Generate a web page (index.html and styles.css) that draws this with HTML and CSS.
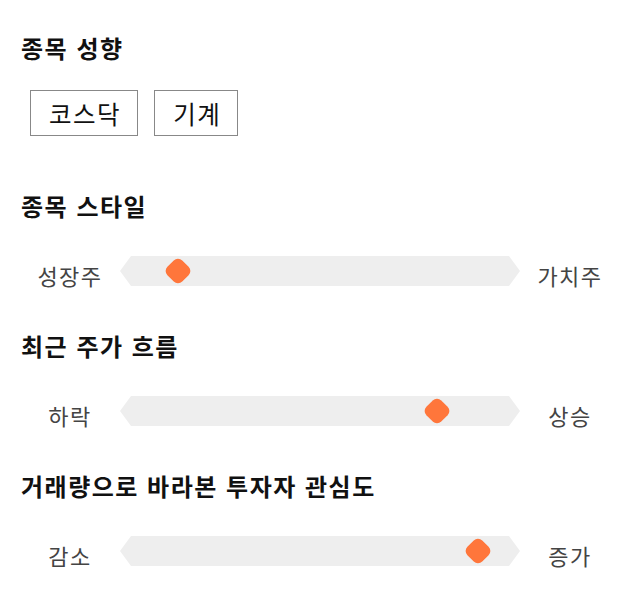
FILE: index.html
```html
<!DOCTYPE html>
<html lang="ko">
<head>
    <meta charset="UTF-8">
    <meta name="viewport" content="width=device-width, initial-scale=1.0">
    <title>종목 분석</title>
    <link rel="stylesheet" href="styles.css">
</head>
<body>
    <div class="container">
        <h2 class="title first">종목 성향</h2>
        <div class="tags">
            <span class="tag">코스닥</span>
            <span class="tag">기계</span>
        </div>

        <h2 class="title">종목 스타일</h2>
        <div class="slider-row">
            <span class="side">성장주</span>
            <div class="track"><span class="thumb" style="left: 14.5%;"></span></div>
            <span class="side">가치주</span>
        </div>

        <h2 class="title">최근 주가 흐름</h2>
        <div class="slider-row">
            <span class="side">하락</span>
            <div class="track"><span class="thumb" style="left: 79.25%;"></span></div>
            <span class="side">상승</span>
        </div>

        <h2 class="title">거래량으로 바라본 투자자 관심도</h2>
        <div class="slider-row">
            <span class="side">감소</span>
            <div class="track"><span class="thumb" style="left: 89.5%;"></span></div>
            <span class="side">증가</span>
        </div>
    </div>
</body>
</html>
```

FILE: styles.css
```css
body {
    margin: 0;
    font-family: "Noto Sans CJK KR", "Noto Sans", sans-serif;
    background: #fff;
    color: #333;
}
.container {
    padding: 0 20px;
}
.title {
    margin: 41px 0 0 1px;
    font-size: 24px;
    line-height: 30px;
    letter-spacing: 1.5px;
    font-weight: bold;
    color: #111;
}
.title.first {
    margin-top: 33px;
}
.tags {
    display: flex;
    gap: 16px;
    margin: 27px 0 0 10px;
}
.tag {
    border: 1px solid #888;
    padding: 0 16px 0 18px;
    height: 44px;
    line-height: 46px;
    font-size: 24.5px;
    letter-spacing: 1.5px;
    color: #111;
}
.tags + .title {
    margin-top: 55px;
}
.slider-row {
    display: grid;
    grid-template-columns: 100px 400px 100px;
    align-items: center;
    margin-top: 31px;
}
.side {
    margin-top: 8px;
    text-align: center;
    font-size: 22px;
    letter-spacing: 1.5px;
    line-height: 30px;
    color: #444;
}
.track {
    position: relative;
    height: 30px;
    background: #eee;
    clip-path: polygon(11px 0, calc(100% - 11px) 0, 100% 50%, calc(100% - 11px) 100%, 11px 100%, 0 50%);
}
.thumb {
    position: absolute;
    top: 50%;
    width: 21px;
    height: 21px;
    background: #ff763b;
    border-radius: 6px;
    transform: translate(-50%, -50%) rotate(45deg);
}
```
